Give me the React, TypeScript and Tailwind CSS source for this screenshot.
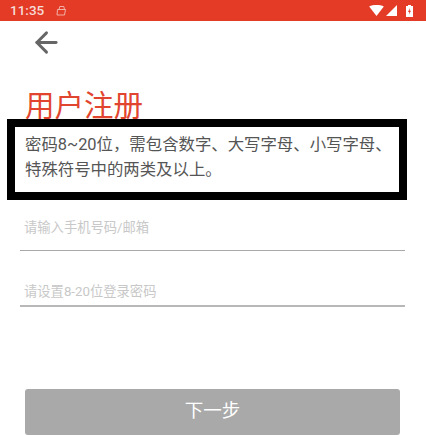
import { ArrowLeft } from 'lucide-react';

const cjk = "font-['Roboto','Noto_Sans_CJK_SC',sans-serif]";

const App = () => {
  return (
    <div className={`relative h-[435px] w-[426px] overflow-hidden bg-white ${cjk}`}>
      {/* Status bar */}
      <div className="flex h-[21px] items-center justify-between bg-[#e33b26] pl-[10px] pr-[13px] text-white">
        <div className="flex items-center gap-[12px]">
          <span className="text-[13.5px] font-medium leading-none text-[#f6dcd8]">11:35</span>
          <svg width="11" height="11" viewBox="0 0 11 11" fill="none" stroke="#f3bdb4" strokeWidth="0.9">
            <path d="M1.5 4.5h8l-1 5.5h-7.5z" />
            <path d="M3 4.5l.8-3h4l.7 3" />
          </svg>
        </div>
        <div className="flex items-center gap-[2px]">
          <svg width="15" height="11" viewBox="0 0 16 12" fill="white"><path d="M0 1.5C4.5-.5 11.500-.5 16 1.500L8 12z" /></svg>
          <svg width="11" height="11" viewBox="0 0 11 11" fill="white"><path d="M11 0v11H0z" /></svg>
          <svg className="ml-[7px]" width="7" height="12" viewBox="0 0 7 12" fill="white">
            <path d="M2 0h3v1h2v11H0V1h2z" />
            <path d="M4 3L2 7h1.300L3 9.500 5 5.800H3.700z" fill="#e33b26" />
          </svg>
        </div>
      </div>

      {/* Back */}
      <div className="pl-[30px] pt-[5px]">
        <ArrowLeft size={33} strokeWidth={2.1} className="text-[#666666]" />
      </div>

      {/* Title */}
      <h1 className="mt-[29px] pl-[25px] text-[29.500px] font-normal leading-[36px] text-[#e2452f]">用户注册</h1>

      {/* Form */}
      <div className="mt-[83px] pl-[20px] pr-[21px]">
        <div className="h-[44px] border-b border-[#a8a8a8] pl-[4px] pt-[11px] text-[13.300px] leading-[20px] text-[#c8c8c8]">
          请输入手机号码/邮箱
        </div>
        <div className="mt-[14px] h-[42px] border-b-2 border-[#b8b8b8] pl-[4px] pt-[17px] text-[13.300px] leading-[20px] text-[#c8c8c8]">
          请设置8-20位登录密码
        </div>
      </div>

      {/* Button */}
      <div className="mt-[82px] pl-[25px] pr-[26px]">
        <button className="flex h-[46px] w-full items-center justify-center rounded-[3px] bg-[#a9a9a9] text-[18.500px] text-white">
          下一步
        </button>
      </div>

      {/* Black annotation box over the page */}
      <div className="absolute left-[7px] top-[119px] h-[81px] w-[400px] whitespace-nowrap border-[8px] border-black bg-white pl-[10px] pt-[5px] text-[16.400px] leading-[25px] text-[#555555]">
        密码8~20位，需包含数字、大写字母、小写字母、
        <br />
        特殊符号中的两类及以上。
      </div>
    </div>
  );
};

export default App;
